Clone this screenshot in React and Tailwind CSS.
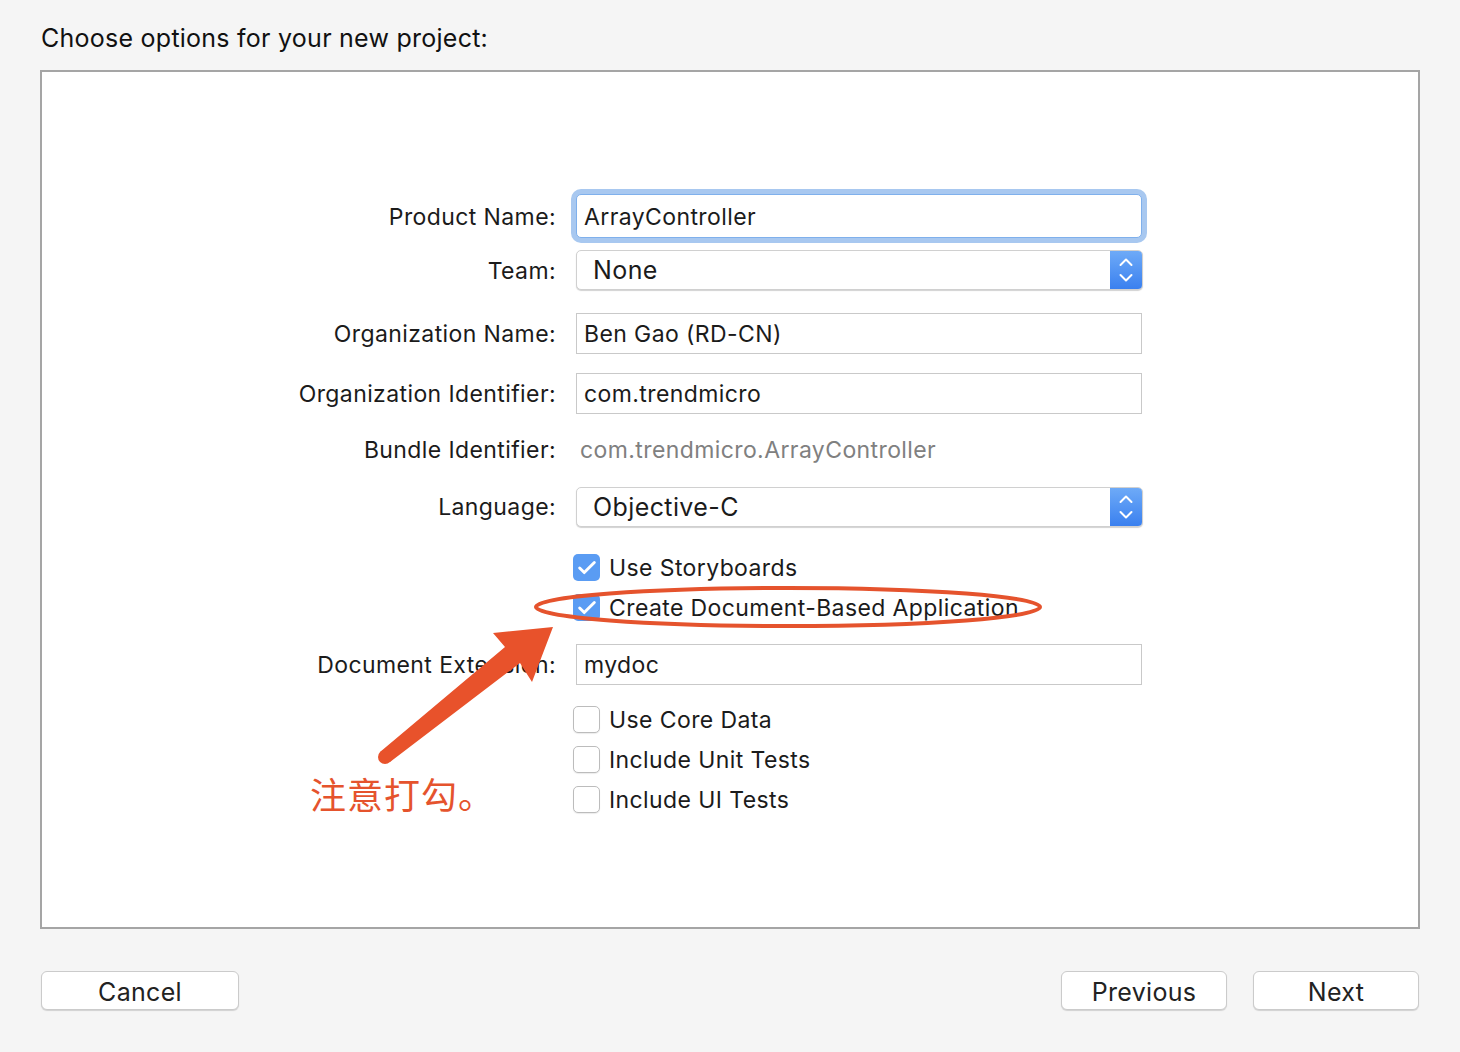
import { Check } from 'lucide-react';

const font = { fontFamily: 'Inter, "Noto Sans CJK SC", sans-serif' };

function Row({ label, className, children }) {
  return (
    <div className={`flex items-center ${className}`}>
      <div className="w-[514px] pt-[2px] text-right text-[23px] tracking-[0.4px] text-[#1b1b1b]">{label}</div>
      <div className="ml-5 flex items-center">{children}</div>
    </div>
  );
}

function TextField({ value, focused }) {
  if (focused) {
    return (
      <div className="w-[566px] h-11 pt-[2px] rounded-[5px] border border-[#7fb0ec] bg-white shadow-[0_0_0_5px_#a8c8f0] flex items-center px-[7px] text-[23px] tracking-[0.4px] text-[#1b1b1b]">
        {value}
      </div>
    );
  }
  return (
    <div className="w-[566px] h-[41px] pt-[2px] border border-[#c9c9c9] bg-white flex items-center px-[7px] text-[23px] tracking-[0.4px] text-[#1b1b1b]">
      {value}
    </div>
  );
}

function Popup({ value }) {
  return (
    <div className="w-[567px] h-10 rounded-[5px] border border-[#d0d0d0] bg-white shadow-[0_1px_1px_rgba(0,0,0,0.18)] flex items-center overflow-hidden">
      <div className="flex-1 pl-4 pt-[2px] text-[25px] tracking-[0.4px] text-[#1b1b1b]">{value}</div>
      <div className="w-[32px] h-full bg-gradient-to-b from-[#6eaaf7] to-[#3a80ef] flex items-center justify-center">
        <svg width="16" height="30" viewBox="0 0 16 30" fill="none" stroke="white" strokeWidth="2" strokeLinecap="round" strokeLinejoin="round">
          <path d="M2.5 10 L8 4.5 L13.5 10" />
          <path d="M2.5 20 L8 25.5 L13.5 20" />
        </svg>
      </div>
    </div>
  );
}

function CheckRow({ label, checked, className }) {
  return (
    <div className={`flex items-center h-[27px] pl-[531px] ${className}`}>
      {checked ? (
        <div className="w-[27px] h-[27px] rounded-[5px] bg-[#5a9cf3] flex items-center justify-center">
          <Check size={22} color="white" strokeWidth={3.2} />
        </div>
      ) : (
        <div className="w-[27px] h-[27px] rounded-[5px] border border-[#bcbcbc] bg-white shadow-[0_1px_1px_rgba(0,0,0,0.08)]" />
      )}
      <span className="ml-[9px] pt-[2px] text-[23px] tracking-[0.4px] text-[#1b1b1b]">{label}</span>
    </div>
  );
}

function Button({ children, className }) {
  return (
    <button className={`h-[39px] pt-[2px] rounded-[6px] border border-[#cbcbcb] bg-white shadow-[0_1px_1px_rgba(0,0,0,0.15)] text-[25px] tracking-[0.3px] text-[#222] ${className}`}>
      {children}
    </button>
  );
}

export default function App() {
  return (
    <div className="relative w-[1460px] h-[1052px] bg-[#f5f5f5] px-10 pt-[22px]" style={font}>
      <h1 className="ml-[1px] text-[25px] tracking-[0.25px] leading-[32px] text-[#111]">Choose options for your new project:</h1>

      <div className="mt-4 w-[1380px] h-[859px] border-2 border-[#a5a5a5] bg-white pt-[116px]">
        <Row label="Product Name:" className="h-[56px]">
          <TextField value="ArrayController" focused />
        </Row>
        <Row label="Team:" className="h-10 mt-[6px]">
          <Popup value="None" />
        </Row>
        <Row label="Organization Name:" className="h-[41px] mt-[23px]">
          <TextField value="Ben Gao (RD-CN)" />
        </Row>
        <Row label="Organization Identifier:" className="h-[41px] mt-[19px]">
          <TextField value="com.trendmicro" />
        </Row>
        <Row label="Bundle Identifier:" className="h-[38px] mt-4">
          <span className="pl-1 pt-[2px] text-[23px] tracking-[0.4px] text-[#808080]">com.trendmicro.ArrayController</span>
        </Row>
        <Row label="Language:" className="h-[39px] mt-[19px]">
          <Popup value="Objective-C" />
        </Row>
        <CheckRow label="Use Storyboards" checked className="mt-7" />
        <CheckRow label="Create Document-Based Application" checked className="mt-[13px]" />
        <Row label="Document Extension:" className="h-[41px] mt-[23px]">
          <TextField value="mydoc" />
        </Row>
        <CheckRow label="Use Core Data" className="mt-[21px]" />
        <CheckRow label="Include Unit Tests" className="mt-[13px]" />
        <CheckRow label="Include UI Tests" className="mt-[13px]" />
      </div>

      <div className="mt-[42px] flex items-center">
        <Button className="w-[198px] ml-[1px]">Cancel</Button>
        <div className="flex-1" />
        <Button className="w-[166px]">Previous</Button>
        <Button className="w-[166px] ml-[26px] mr-[1px]">Next</Button>
      </div>

      {/* annotation overlay */}
      <svg className="absolute left-0 top-0 pointer-events-none" width="1460" height="1052">
        <ellipse cx="788" cy="607" rx="252" ry="19" fill="none" stroke="#e5532d" strokeWidth="4" />
        <polygon
          fill="#e8522b"
          points="380,752 505,647 493,633 553,627 532,682 520,663 390,762"
        />
        <circle cx="385" cy="757" r="7" fill="#e8522b" />
      </svg>
      <div className="absolute left-[310px] top-[775px] text-[36px] tracking-[1px] leading-none text-[#e5532d]" style={{ fontFamily: '"Noto Sans CJK SC", sans-serif' }}>
        注意打勾。
      </div>
    </div>
  );
}
